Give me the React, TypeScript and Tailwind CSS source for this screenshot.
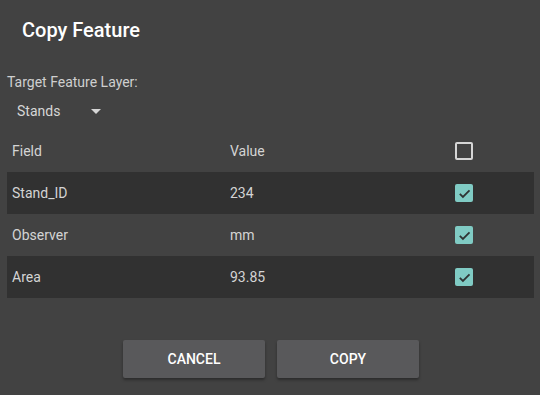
import { type ReactNode } from "react";

const rows = [
  { field: "Stand_ID", value: "234", dark: true },
  { field: "Observer", value: "mm", dark: false },
  { field: "Area", value: "93.85", dark: true },
];

function Check({ checked }: { checked: boolean }): ReactNode {
  if (!checked) {
    return <div className="w-[18px] h-[18px] rounded-[2px] border-2 border-[#d6d6d6]" />;
  }
  return (
    <div className="w-[18px] h-[18px] rounded-[2px] bg-[#80cbc4] flex items-center justify-center">
      <svg width="15" height="15" viewBox="0 0 24 24" fill="none">
        <path d="M4.5 12.5l5 5L20 7" stroke="#2f3333" strokeWidth="2.8" />
      </svg>
    </div>
  );
}

export default function App(): ReactNode {
  return (
    <div className="w-[540px] h-[395px] bg-[#424242] font-['Roboto',sans-serif] flex flex-col">
      <div className="pt-[18px] pl-[22px] text-[20px] leading-[24px] font-medium text-white">Copy Feature</div>
      <div className="mt-[32px] pl-[7px] text-[14px] leading-[16px] text-[#cfcfcf]">Target Feature Layer:</div>
      <div className="mt-[13px] pl-[17px] flex items-center text-[14px] leading-[16px] text-[#d6d6d6]">
        <span className="w-[74px]">Stands</span>
        <svg width="10" height="5" viewBox="0 0 10 5">
          <path d="M0 0h10L5 5z" fill="#d6d6d6" />
        </svg>
      </div>
      <div className="mt-[11px] mx-[7px] w-[527px] flex flex-col text-[14px] text-[#d4d4d4]">
        <div className="h-[42px] flex items-center">
          <span className="pl-[5px] w-[223px]">Field</span>
          <span className="w-[225px]">Value</span>
          <Check checked={false} />
        </div>
        {rows.map((r) => (
          <div key={r.field} className={`h-[42px] flex items-center ${r.dark ? "bg-[#313131]" : ""}`}>
            <span className="pl-[5px] w-[223px]">{r.field}</span>
            <span className="w-[225px]">{r.value}</span>
            <Check checked />
          </div>
        ))}
      </div>
      <div className="mt-[42px] flex justify-center gap-3 pl-[2px]">
        <button className="w-[142px] h-[38px] rounded-[2px] bg-[#59595b] shadow-[0_2px_3px_rgba(0,0,0,0.35)] text-white text-[14px] font-medium">
          CANCEL
        </button>
        <button className="w-[142px] h-[38px] rounded-[2px] bg-[#59595b] shadow-[0_2px_3px_rgba(0,0,0,0.35)] text-white text-[14px] font-medium">
          COPY
        </button>
      </div>
    </div>
  );
}
